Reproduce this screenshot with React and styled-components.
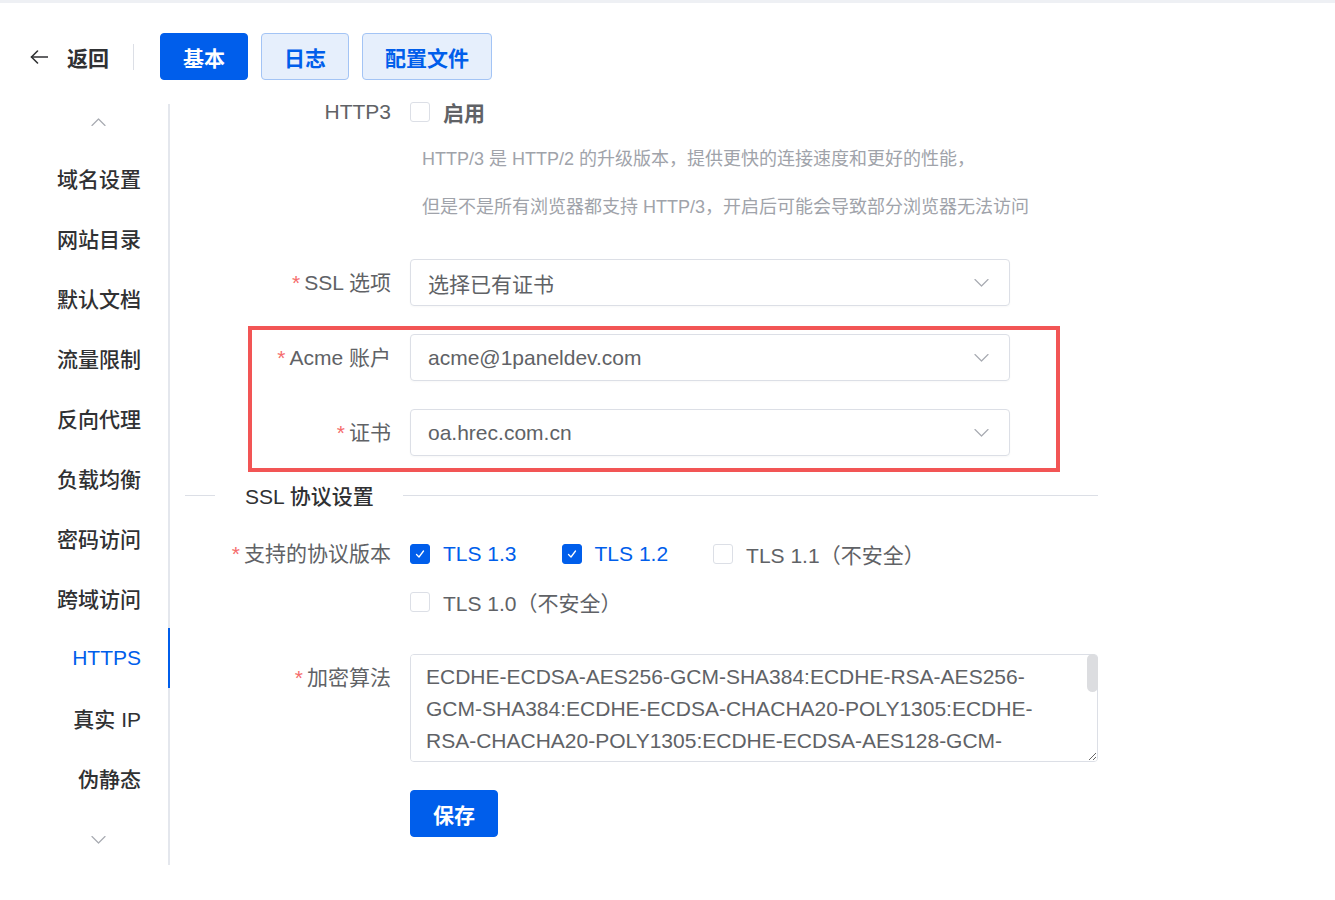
import styled, { createGlobalStyle } from "styled-components";

const GlobalStyle = createGlobalStyle`
  body {
    margin: 0;
    background: #ffffff;
    font-family: "Liberation Sans", "Noto Sans CJK SC", sans-serif;
    color: #303133;
  }
`;

const Page = styled.div`
  border-top: 3px solid #eef0f4;
`;

const Header = styled.div`
  display: flex;
  align-items: center;
  height: 47px;
  padding: 30px 0 8px 30px;
`;

const BackLink = styled.div`
  display: flex;
  align-items: center;
  gap: 19px;
  font-size: 21px;
  font-weight: 600;
  color: #303133;
`;

const HeaderDivider = styled.div`
  width: 1px;
  height: 26px;
  background: #dcdfe6;
  margin: 0 26px 0 24px;
`;

const ButtonRow = styled.div`
  display: flex;
  gap: 13px;
`;

const Button = styled.button`
  box-sizing: border-box;
  height: 47px;
  padding: 0 22px;
  border-radius: 4px;
  border: 1px solid ${(p) => (p.$primary ? "#005eeb" : "#a3c4f5")};
  background: ${(p) => (p.$primary ? "#005eeb" : "#e6effc")};
  color: ${(p) => (p.$primary ? "#ffffff" : "#005eeb")};
  font-family: inherit;
  font-size: 21px;
  font-weight: 600;
  cursor: pointer;
`;

const Body = styled.div`
  display: flex;
  align-items: flex-start;
`;

const Sidebar = styled.div`
  width: 170px;
  margin-top: 16px;
  display: flex;
  flex-direction: column;
`;

const ArrowZone = styled.div`
  height: 36px;
  padding: ${(p) => p.$pad};
  display: flex;
  align-items: center;
  justify-content: center;
  border-right: 2px solid #e4e7ed;
`;

const Tab = styled.div`
  height: 60px;
  display: flex;
  align-items: center;
  justify-content: flex-end;
  padding-right: 27px;
  border-right: 2px solid ${(p) => (p.$active ? "#005eeb" : "#e4e7ed")};
  font-size: 21px;
  font-weight: ${(p) => (p.$active ? 400 : 500)};
  color: ${(p) => (p.$active ? "#005eeb" : "#303133")};
`;

const Content = styled.div`
  padding-left: 15px;
  width: 913px;
`;

const FormItem = styled.div`
  display: grid;
  grid-template-columns: ${(p) => p.$labelWidth || 225}px auto;
  align-items: start;
  margin-bottom: ${(p) => (p.$mb === undefined ? 28 : p.$mb)}px;
`;

const Label = styled.div`
  text-align: right;
  padding-right: 19px;
  line-height: 47px;
  font-size: 21px;
  color: #606266;
  white-space: nowrap;
`;

const Star = styled.span`
  color: #f56c6c;
  margin-right: 4px;
`;

const Highlight = styled.div`
  width: 804px;
  margin: 0 0 11px 63px;
  padding: 4px 0 12px 0;
  border: 4px solid #f25555;
`;

const Select = styled.div`
  width: 600px;
  height: 47px;
  box-sizing: border-box;
  border: 1px solid #dcdfe6;
  border-radius: 4px;
  padding: 0 20px 0 17px;
  display: flex;
  align-items: center;
  justify-content: space-between;
  font-size: 21px;
  color: #606266;
  box-shadow: 0 1px 2px rgba(0, 0, 0, 0.03);
`;

const CheckGroup = styled.div`
  width: 600px;
  display: flex;
  flex-wrap: wrap;
`;

const CheckItem = styled.label`
  display: flex;
  align-items: center;
  gap: 13px;
  height: ${(p) => p.$h || 48}px;
  margin-right: 45px;
  font-size: 21px;
  font-weight: ${(p) => (p.$bold ? 600 : 400)};
  color: ${(p) => (p.$checked ? "#005eeb" : "#606266")};
  white-space: nowrap;
`;

const Box = styled.span`
  width: 20px;
  height: 20px;
  box-sizing: border-box;
  border: 1px solid ${(p) => (p.$checked ? "#005eeb" : "#dcdfe6")};
  border-radius: 3px;
  background: ${(p) => (p.$checked ? "#005eeb" : "#ffffff")};
  display: flex;
  align-items: center;
  justify-content: center;
`;

const HelpText = styled.div`
  padding-left: 12px;
  line-height: 48px;
  font-size: 18px;
  color: #a0a3aa;
  white-space: nowrap;
`;

const SectionDivider = styled.div`
  display: flex;
  align-items: center;
  height: 24px;
  margin-bottom: 23px;
  font-size: 21px;
  font-weight: 500;
  color: #303133;
  &::before,
  &::after {
    content: "";
    height: 1px;
    background: #dcdfe6;
  }
  &::before {
    width: 30px;
  }
  &::after {
    flex: 1;
  }
`;

const DividerText = styled.span`
  padding: 0 29px 0 30px;
`;

const TextAreaWrap = styled.div`
  position: relative;
  width: 688px;
`;

const TextArea = styled.textarea`
  width: 688px;
  height: 108px;
  box-sizing: border-box;
  border: 1px solid #dcdfe6;
  border-radius: 4px;
  padding: 6px 27px 6px 15px;
  font-family: inherit;
  font-size: 21px;
  line-height: 32px;
  color: #606266;
  resize: vertical;
  outline: none;
  display: block;
`;

/* scrollbar thumb drawn over the textarea's right edge */
const ScrollThumb = styled.div`
  position: absolute;
  top: 0;
  right: 0;
  width: 11px;
  height: 38px;
  border-radius: 6px;
  background: #dcdde0;
`;

function BackArrow() {
  return (
    <svg width="18" height="14" viewBox="0 0 18 14" fill="none" stroke="#303133" strokeWidth="1.6" strokeLinecap="round" strokeLinejoin="round">
      <path d="M1.5 7h16" />
      <path d="M7.5 1L1.5 7l6 6" />
    </svg>
  );
}

function Chevron({ up }) {
  return (
    <svg width="15" height="8" viewBox="0 0 15 8" fill="none" stroke="#a8abb2" strokeWidth="1.2" strokeLinecap="round" strokeLinejoin="round">
      <path d={up ? "M1 7.5L7.5 1l6.5 6.5" : "M1 0.5L7.5 7l6.5-6.5"} />
    </svg>
  );
}

function Check() {
  return (
    <svg width="12" height="12" viewBox="0 0 12 12" fill="none" stroke="#ffffff" strokeWidth="1.3" strokeLinecap="round" strokeLinejoin="round">
      <path d="M2.5 6.5l2.5 2.5 4.5-6" />
    </svg>
  );
}

function Checkbox({ checked, label, bold, h }) {
  return (
    <CheckItem $checked={checked} $bold={bold} $h={h}>
      <Box $checked={checked}>{checked && <Check />}</Box>
      {label}
    </CheckItem>
  );
}

const tabs = [
  "域名设置",
  "网站目录",
  "默认文档",
  "流量限制",
  "反向代理",
  "负载均衡",
  "密码访问",
  "跨域访问",
  "HTTPS",
  "真实 IP",
  "伪静态",
];

const ciphers =
  "ECDHE-ECDSA-AES256-GCM-SHA384:ECDHE-RSA-AES256-GCM-SHA384:ECDHE-ECDSA-CHACHA20-POLY1305:ECDHE-RSA-CHACHA20-POLY1305:ECDHE-ECDSA-AES128-GCM-SHA256:ECDHE-RSA-AES128-GCM-SHA256:ECDHE-ECDSA-AES256-SHA384:ECDHE-RSA-AES256-SHA384:ECDHE-ECDSA-AES128-SHA256:ECDHE-RSA-AES128-SHA256:!aNULL:!eNULL:!EXPORT:!DES:!RC4:!MD5:!PSK";

export default function App() {
  return (
    <Page>
      <GlobalStyle />
      <Header>
        <BackLink>
          <BackArrow />
          返回
        </BackLink>
        <HeaderDivider />
        <ButtonRow>
          <Button $primary>基本</Button>
          <Button>日志</Button>
          <Button>配置文件</Button>
        </ButtonRow>
      </Header>
      <Body>
        <Sidebar>
          <ArrowZone $pad="0 0 8px 28px">
            <Chevron up />
          </ArrowZone>
          {tabs.map((t) => (
            <Tab key={t} $active={t === "HTTPS"}>
              {t}
            </Tab>
          ))}
          <ArrowZone $pad="14px 0 7px 28px">
            <Chevron />
          </ArrowZone>
        </Sidebar>
        <Content>
          <FormItem>
            <Label>HTTP3</Label>
            <div>
              <Checkbox label="启用" bold h={47} />
              <HelpText>HTTP/3 是 HTTP/2 的升级版本，提供更快的连接速度和更好的性能，</HelpText>
              <HelpText>但是不是所有浏览器都支持 HTTP/3，开启后可能会导致部分浏览器无法访问</HelpText>
            </div>
          </FormItem>
          <FormItem $mb={20}>
            <Label>
              <Star>*</Star>SSL 选项
            </Label>
            <Select>
              选择已有证书
              <Chevron />
            </Select>
          </FormItem>
          <Highlight>
            <FormItem $labelWidth={158}>
              <Label>
                <Star>*</Star>Acme 账户
              </Label>
              <Select>
                acme@1paneldev.com
                <Chevron />
              </Select>
            </FormItem>
            <FormItem $labelWidth={158} $mb={0}>
              <Label>
                <Star>*</Star>证书
              </Label>
              <Select>
                oa.hrec.com.cn
                <Chevron />
              </Select>
            </FormItem>
          </Highlight>
          <SectionDivider>
            <DividerText>SSL 协议设置</DividerText>
          </SectionDivider>
          <FormItem>
            <Label>
              <Star>*</Star>支持的协议版本
            </Label>
            <CheckGroup>
              <Checkbox checked label="TLS 1.3" />
              <Checkbox checked label="TLS 1.2" />
              <Checkbox label="TLS 1.1（不安全）" />
              <Checkbox label="TLS 1.0（不安全）" />
            </CheckGroup>
          </FormItem>
          <FormItem>
            <Label>
              <Star>*</Star>加密算法
            </Label>
            <TextAreaWrap>
              <TextArea defaultValue={ciphers} spellCheck={false} />
              <ScrollThumb />
            </TextAreaWrap>
          </FormItem>
          <FormItem>
            <Label />
            <div>
              <Button $primary>保存</Button>
            </div>
          </FormItem>
        </Content>
      </Body>
    </Page>
  );
}
